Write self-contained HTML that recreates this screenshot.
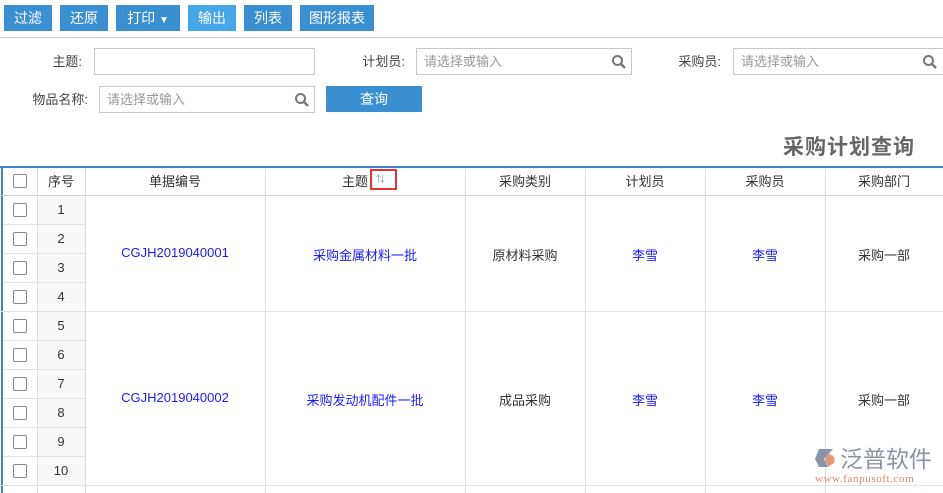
<!DOCTYPE html>
<html><head><meta charset="utf-8"><style>
*{box-sizing:border-box;margin:0;padding:0}
body{width:943px;height:493px;overflow:hidden;background:#fff;font-family:"Liberation Sans","Noto Sans CJK SC",sans-serif;font-size:13px;color:#333;position:relative}
.a{position:absolute}
.btn{position:absolute;top:5px;height:26px;background:#3a8fd0;color:#fff;font-size:14px;line-height:26px;text-align:center}
.lbl{position:absolute;font-size:13px;color:#444;text-align:right;line-height:27px}
.inp{position:absolute;height:27px;border:1px solid #c8c8c8;background:#fff;color:#999;font-size:13px;line-height:25px;padding-left:7px}
.inp svg{position:absolute;right:4px;top:5px}
.v{position:absolute;background:#ddd;width:1px}
.h{position:absolute;background:#e2e2e2;height:1px}
.c{position:absolute;text-align:center;font-size:13px}
.cb{position:absolute;left:13px;width:14px;height:14px;border:1px solid #888;border-radius:2px;background:#fff}
.blue{color:#1a1aff}
.hd{top:171px}
</style></head><body>
<div class="btn" style="left:4px;width:48px">过滤</div>
<div class="btn" style="left:60px;width:48px">还原</div>
<div class="btn" style="left:116px;width:64px">打印 <span style="font-size:10px">▼</span></div>
<div class="btn" style="left:188px;width:48px;background:#45a6e8">输出</div>
<div class="btn" style="left:244px;width:48px">列表</div>
<div class="btn" style="left:300px;width:74px">图形报表</div>
<div class="a" style="left:0;top:37px;width:943px;height:1px;background:#ccc"></div>

<div class="lbl" style="left:20px;width:62px;top:48px">主题:</div>
<div class="inp" style="left:94px;top:48px;width:221px"></div>
<div class="lbl" style="left:340px;width:65px;top:48px">计划员:</div>
<div class="inp" style="left:416px;top:48px;width:216px">请选择或输入<svg width="16" height="16" viewBox="0 0 16 16"><circle cx="6.5" cy="6.5" r="4.5" fill="none" stroke="#777" stroke-width="2"/><path d="M10 10l4 4" stroke="#777" stroke-width="2.4"/></svg></div>
<div class="lbl" style="left:660px;width:61px;top:48px">采购员:</div>
<div class="inp" style="left:733px;top:48px;width:215px">请选择或输入<svg width="16" height="16" viewBox="0 0 16 16" style="right:9px"><circle cx="6.5" cy="6.5" r="4.5" fill="none" stroke="#777" stroke-width="2"/><path d="M10 10l4 4" stroke="#777" stroke-width="2.4"/></svg></div>
<div class="lbl" style="left:10px;width:78px;top:86px">物品名称:</div>
<div class="inp" style="left:99px;top:86px;width:216px">请选择或输入<svg width="16" height="16" viewBox="0 0 16 16"><circle cx="6.5" cy="6.5" r="4.5" fill="none" stroke="#777" stroke-width="2"/><path d="M10 10l4 4" stroke="#777" stroke-width="2.4"/></svg></div>
<div class="a" style="left:326px;top:86px;width:96px;height:26px;background:#3a8fd0;color:#fff;font-size:14px;line-height:26px;text-align:center">查询</div>

<div class="a" style="left:760px;top:133px;width:155px;text-align:right;font-size:21px;font-weight:bold;color:#666;line-height:30px;letter-spacing:1px">采购计划查询</div>

<div class="a" style="left:0;top:166px;width:943px;height:2px;background:#3a87c8"></div>
<div class="a" style="left:1px;top:166px;width:2px;height:327px;background:#3a87c8"></div>
<div class="a" style="left:37px;top:196px;width:48px;height:290px;background:#f8f8f8"></div>
<div class="h" style="left:0;top:195px;width:943px;background:#ccc"></div>
<div class="h" style="left:0;top:311px;width:943px"></div>
<div class="h" style="left:0;top:485px;width:943px"></div>
<div class="h" style="left:3px;top:224px;width:82px"></div>
<div class="h" style="left:3px;top:253px;width:82px"></div>
<div class="h" style="left:3px;top:282px;width:82px"></div>
<div class="h" style="left:3px;top:340px;width:82px"></div>
<div class="h" style="left:3px;top:369px;width:82px"></div>
<div class="h" style="left:3px;top:398px;width:82px"></div>
<div class="h" style="left:3px;top:427px;width:82px"></div>
<div class="h" style="left:3px;top:456px;width:82px"></div>
<div class="v" style="left:37px;top:168px;height:325px"></div>
<div class="v" style="left:85px;top:168px;height:325px"></div>
<div class="v" style="left:265px;top:168px;height:325px"></div>
<div class="v" style="left:465px;top:168px;height:325px"></div>
<div class="v" style="left:585px;top:168px;height:325px"></div>
<div class="v" style="left:705px;top:168px;height:325px"></div>
<div class="v" style="left:825px;top:168px;height:325px"></div>

<div class="cb" style="top:174px"></div>
<div class="c hd" style="left:37px;width:48px">序号</div>
<div class="c hd" style="left:85px;width:180px">单据编号</div>
<div class="c hd" style="left:326px;width:58px">主题</div>
<div class="a" style="left:370px;top:169px;width:27px;height:21px;border:2px solid #e53333;font-size:9px;color:#999;line-height:17px;padding-left:4px">⇅</div>
<div class="c hd" style="left:465px;width:120px">采购类别</div>
<div class="c hd" style="left:585px;width:120px">计划员</div>
<div class="c hd" style="left:705px;width:120px">采购员</div>
<div class="c hd" style="left:825px;width:118px">采购部门</div>

<div class="cb" style="top:203px"></div><div class="c" style="left:37px;width:48px;top:202px">1</div>
<div class="cb" style="top:232px"></div><div class="c" style="left:37px;width:48px;top:231px">2</div>
<div class="cb" style="top:261px"></div><div class="c" style="left:37px;width:48px;top:260px">3</div>
<div class="cb" style="top:290px"></div><div class="c" style="left:37px;width:48px;top:289px">4</div>
<div class="cb" style="top:319px"></div><div class="c" style="left:37px;width:48px;top:318px">5</div>
<div class="cb" style="top:348px"></div><div class="c" style="left:37px;width:48px;top:347px">6</div>
<div class="cb" style="top:377px"></div><div class="c" style="left:37px;width:48px;top:376px">7</div>
<div class="cb" style="top:406px"></div><div class="c" style="left:37px;width:48px;top:405px">8</div>
<div class="cb" style="top:435px"></div><div class="c" style="left:37px;width:48px;top:434px">9</div>
<div class="cb" style="top:464px"></div><div class="c" style="left:37px;width:48px;top:463px">10</div>

<div class="c blue" style="left:85px;width:180px;top:245px">CGJH2019040001</div>
<div class="c blue" style="left:265px;width:200px;top:245px">采购金属材料一批</div>
<div class="c" style="left:465px;width:120px;top:245px">原材料采购</div>
<div class="c blue" style="left:585px;width:120px;top:245px">李雪</div>
<div class="c blue" style="left:705px;width:120px;top:245px">李雪</div>
<div class="c" style="left:825px;width:118px;top:245px">采购一部</div>

<div class="c blue" style="left:85px;width:180px;top:390px">CGJH2019040002</div>
<div class="c blue" style="left:265px;width:200px;top:390px">采购发动机配件一批</div>
<div class="c" style="left:465px;width:120px;top:390px">成品采购</div>
<div class="c blue" style="left:585px;width:120px;top:390px">李雪</div>
<div class="c blue" style="left:705px;width:120px;top:390px">李雪</div>
<div class="c" style="left:825px;width:118px;top:390px">采购一部</div>

<svg class="a" style="left:813px;top:446px" width="26" height="26" viewBox="0 0 26 26"><path d="M6 3h14l-9 10 4 8H6L2 13z" fill="#8a93a8"/><path d="M14 8c6 0 9 4 7 9l-6 4-3-7z" fill="#e39a7a"/></svg>
<div class="a" style="left:840px;top:445px;font-size:23px;color:#8a93a8;line-height:28px;white-space:nowrap">泛普软件</div>
<div class="a" style="left:815px;top:473px;font-size:11px;color:#d98a6a;font-family:'Liberation Serif',serif;letter-spacing:0.6px;white-space:nowrap">www.fanpusoft.com</div>
</body></html>
